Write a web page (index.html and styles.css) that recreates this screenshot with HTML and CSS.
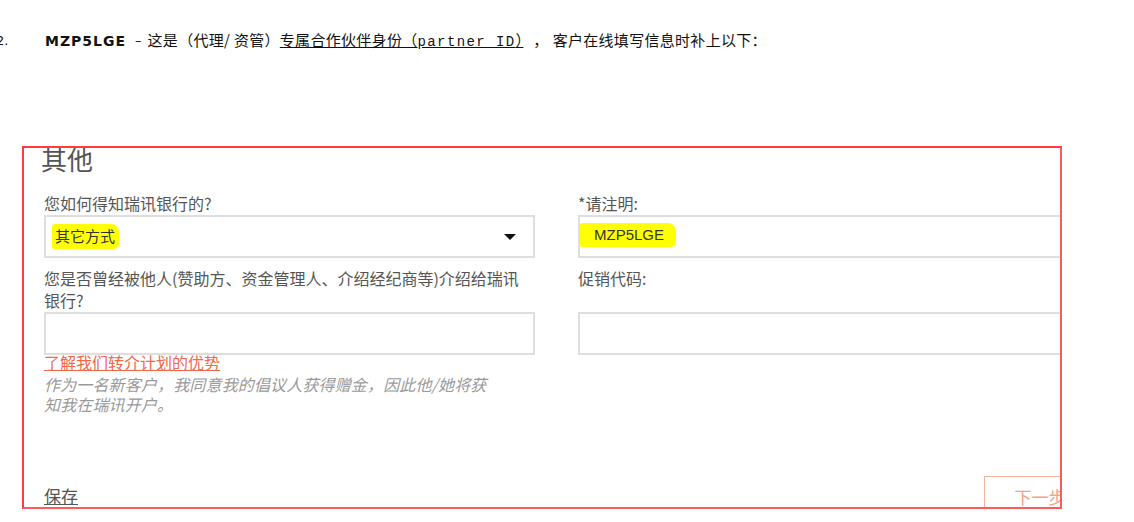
FILE: index.html
```html
<!DOCTYPE html>
<html lang="zh-CN">
<head>
<meta charset="utf-8">
<title>其他</title>
<link rel="stylesheet" href="styles.css">
</head>
<body>
<div class="intro">
  <span class="num">2.</span>
  <span class="code">MZP5LGE</span>
  <span class="dash">–</span>
  <span class="zh">这是（代理/ 资管）<span class="ul">专属合作伙伴身份（<span class="mono">partner ID</span>）</span><span class="comma">，</span>客户在线填写信息时补上以下：</span>
</div>

<div class="frame">
  <h2 class="title">其他</h2>
  <div class="grid">
    <label class="label">您如何得知瑞讯银行的?</label>
    <label class="label">*请注明:</label>
    <div class="box select">
      <span class="mark mark-a">其它方式</span>
      <span class="caret"></span>
    </div>
    <div class="box">
      <span class="mark mark-b">MZP5LGE</span>
    </div>
    <label class="label label-wide">您是否曾经被他人(赞助方、资金管理人、介绍经纪商等)介绍给瑞讯银行?</label>
    <label class="label label-row2">促销代码:</label>
    <div class="box"></div>
    <div class="box"></div>
    <div class="extra">
      <a class="link" href="#">了解我们转介计划的优势</a>
      <p class="note">作为一名新客户，我同意我的倡议人获得赠金，因此他/她将获知我在瑞讯开户。</p>
    </div>
  </div>
  <div class="footer">
    <a class="save" href="#">保存</a>
    <span class="next">下一步</span>
  </div>
</div>
</body>
</html>
```

FILE: styles.css
```css
html, body {
  margin: 0;
  padding: 0;
  background: #fff;
}

body {
  width: 1134px;
  height: 522px;
  overflow: hidden;
  font-family: "Noto Sans CJK SC", "Noto Sans", sans-serif;
}

.intro {
  display: flex;
  align-items: center;
  height: 20px;
  margin-top: 31px;
  white-space: nowrap;
  color: #111;
  font-size: 14px;
  line-height: 20px;
}

.num {
  width: 49px;
  margin-left: -4px;
  font-family: "DejaVu Sans", sans-serif;
  font-size: 13px;
}

.code {
  font-family: "DejaVu Sans", sans-serif;
  font-weight: bold;
  font-size: 14px;
  letter-spacing: 1px;
}

.dash {
  margin: 0 6px 0 9px;
  font-family: "DejaVu Sans", sans-serif;
  font-size: 13px;
}

.zh {
  font-family: "Noto Sans CJK SC", sans-serif;
  font-size: 15px;
  letter-spacing: 0.3px;
}

.ul {
  text-decoration: underline;
}

.mono {
  font-family: "Liberation Mono", monospace;
  font-size: 14px;
  letter-spacing: 1.4px;
}

.comma {
  margin: 0 4px 0 10px;
}

.frame {
  box-sizing: border-box;
  width: 1040px;
  height: 363px;
  margin: 95px 0 0 22px;
  padding: 0 0 0 20px;
  border: 2px solid #ff5a5a;
  border-top-color: #ff3b3b;
  border-left-color: #ff3b3b;
  overflow: hidden;
  color: #555;
}

.title {
  margin: -4px 0 0 -3px;
  font-size: 26px;
  line-height: 30px;
  font-weight: normal;
  color: #555;
}

.grid {
  display: grid;
  grid-template-columns: 491px 491px;
  column-gap: 43px;
  margin-top: 18px;
  width: 1025px;
}

.label {
  display: block;
  font-size: 16px;
  line-height: 22px;
  color: #555;
  margin-bottom: 1px;
}

.label-wide {
  padding-right: 14px;
  margin-top: 9px;
}

.label-row2 {
  margin-top: 9px;
}

.box {
  box-sizing: border-box;
  position: relative;
  height: 43px;
  border: 2px solid #dedede;
  background: #fff;
  display: flex;
  align-items: center;
}

.mark {
  background: #ffff00;
  color: #333;
  border-radius: 3px 8px 5px 2px;
}

.mark-a {
  margin-left: 6px;
  padding: 3px 4px 4px 3px;
  font-size: 15px;
  line-height: 18px;
}

.mark-b {
  margin-left: 0;
  padding: 2px 12px 2px 14px;
  font-family: "Liberation Sans", Arial, sans-serif;
  font-size: 15px;
  line-height: 20px;
  margin-top: -4px;
}

.caret {
  position: absolute;
  right: 17px;
  top: 17px;
  width: 0;
  height: 0;
  border-left: 6px solid transparent;
  border-right: 6px solid transparent;
  border-top: 6px solid #111;
}

.extra {
  grid-column: 1;
}

.link {
  display: block;
  margin-top: -2px;
  font-size: 16px;
  line-height: 18px;
  color: #f4684a;
  text-decoration: underline;
}

.note {
  margin: 3px 0 0;
  max-width: 452px;
  font-size: 16px;
  line-height: 20px;
  letter-spacing: 0.15px;
  font-style: italic;
  color: #9a9a9a;
}

.footer {
  display: flex;
  align-items: center;
  justify-content: space-between;
  width: 1052px;
  margin-top: 62px;
}

.save {
  font-size: 17px;
  line-height: 22px;
  color: #555;
  text-decoration: underline;
}

.next {
  box-sizing: border-box;
  display: flex;
  align-items: center;
  justify-content: center;
  width: 112px;
  height: 40px;
  border: 1px solid #f8b19c;
  color: #f6a185;
  font-size: 17px;
}
```
